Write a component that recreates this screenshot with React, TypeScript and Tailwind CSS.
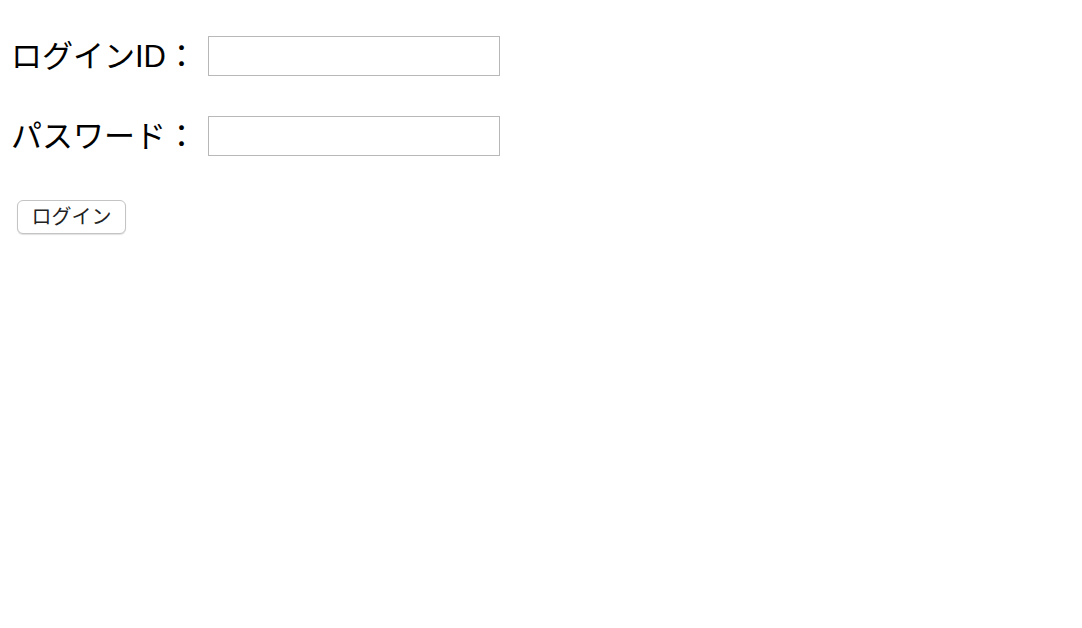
import { useState } from 'react';

const FONT = '"Liberation Sans", "Noto Sans CJK JP", sans-serif';

export default function App() {
  const [loginId, setLoginId] = useState('');
  const [password, setPassword] = useState('');

  return (
    <div className="min-h-screen bg-white text-black" style={{ fontFamily: FONT }}>
      <form className="flex flex-col items-start pl-[11px] pt-[36px]" onSubmit={(e) => e.preventDefault()}>
        <div className="flex items-center h-[40px]">
          <label className="w-[197px] text-[31px] leading-none">ログインID：</label>
          <input
            type="text"
            value={loginId}
            onChange={(e) => setLoginId(e.target.value)}
            className="w-[292px] h-[40px] border border-[#b8b8b8] bg-white outline-none px-1"
          />
        </div>
        <div className="flex items-center h-[40px] mt-[40px]">
          <label className="w-[197px] text-[31px] leading-none">パスワード：</label>
          <input
            type="password"
            value={password}
            onChange={(e) => setPassword(e.target.value)}
            className="w-[292px] h-[40px] border border-[#b8b8b8] bg-white outline-none px-1"
          />
        </div>
        <button
          type="submit"
          className="ml-[6px] mt-[44px] w-[109px] h-[34px] rounded-[6px] border border-[#c4c4c4] bg-white text-[20px] leading-none text-[#222] shadow-[0_1px_1px_rgba(0,0,0,0.12)]"
        >
          ログイン
        </button>
      </form>
    </div>
  );
}
